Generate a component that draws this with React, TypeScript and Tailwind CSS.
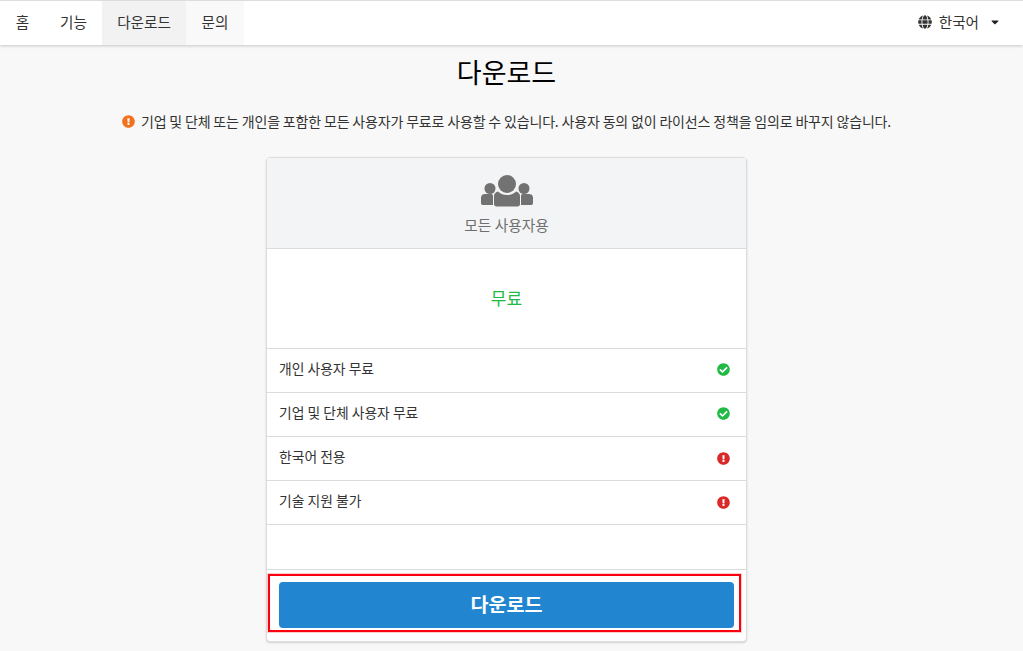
import { FaCaretDown, FaCheckCircle, FaExclamationCircle, FaGlobe } from 'react-icons/fa'

const rows = [
  { label: '개인 사용자 무료', ok: true },
  { label: '기업 및 단체 사용자 무료', ok: true },
  { label: '한국어 전용', ok: false },
  { label: '기술 지원 불가', ok: false },
]

const navItems = [
  { label: '홈', className: 'w-[45px]' },
  { label: '기능', className: 'w-[57px]' },
  { label: '다운로드', className: 'w-[84px] bg-[#f2f2f2]' },
  { label: '문의', className: 'w-[58px] bg-[#f9f9f9]' },
]

function UsersIcon() {
  return (
    <svg width="54" height="34" viewBox="0 0 54 34" fill="#727272">
      <circle cx="27" cy="11" r="9" />
      <circle cx="10" cy="15.5" r="5.5" />
      <circle cx="44" cy="15.5" r="5.5" />
      <path d="M1 32v-7.5C1 22 3 21 5 21h6.5C12.5 21 13 22 13 23v9H3c-1 0-2-.4-2-2z" />
      <path d="M53 32v-7.5C53 22 51 21 49 21h-6.5C41.5 21 41 22 41 23v9h10c1 0 2-.4 2-2z" />
      <path d="M14 23c0-2.500 2-4 4-4.500 2.500 2.500 5.500 3.500 9 3.500s6.500-1 9-3.500c2 .5 4 2 4 4.500v8c0 1.500-1 2.500-2.500 2.500h-21C15 33.500 14 32.500 14 31z" />
    </svg>
  )
}

export default function App() {
  return (
    <div className="h-[651px] overflow-hidden bg-[#f8f8f8] text-[14px] tracking-[-0.17px] text-[#333333] font-['Noto_Sans_CJK_KR','Liberation_Sans',sans-serif]">
      <header className="flex h-[45px] items-stretch justify-between border-t border-[#dddddd] bg-white shadow-[0_1px_3px_rgba(0,0,0,0.2)]">
        <nav className="flex text-[14.6px] tracking-normal">
          {navItems.map((item) => (
            <div key={item.label} className={`flex items-center justify-center pb-[3px] ${item.className}`}>
              {item.label}
            </div>
          ))}
        </nav>
        <div className="flex items-center pr-[22px] pb-[2px] text-[14.6px] tracking-normal">
          <FaGlobe className="mr-[7px] text-[14px]" />
          <span>한국어</span>
          <FaCaretDown className="ml-[10px] text-[12px] text-[#222222]" />
        </div>
      </header>

      <main className="flex w-[1013px] flex-col items-center">
        <h1 className="mt-[9px] text-[27px] leading-[36px] font-normal tracking-normal text-black">다운로드</h1>
        <p className="mt-[21px] flex h-[20px] items-center whitespace-nowrap">
          <FaExclamationCircle className="mr-[6px] text-[13px] text-[#f2711c]" />
          기업 및 단체 또는 개인을 포함한 모든 사용자가 무료로 사용할 수 있습니다. 사용자 동의 없이 라이선스 정책을 임의로 바꾸지 않습니다.
        </p>

        <section className="relative mt-[26px] w-[481px] rounded-[4px] border border-[#dcdcdc] bg-white shadow-[0_1px_2px_rgba(0,0,0,0.15)]">
          <div className="flex h-[91px] flex-col items-center border-b border-[#dcdcdc] bg-[#f3f4f5] pt-[15px] text-[#6f6f6f]">
            <UsersIcon />
            <span className="mt-[8px] text-[14.7px] leading-[20px] tracking-normal">모든 사용자용</span>
          </div>
          <div className="flex h-[100px] items-center justify-center border-b border-[#dcdcdc] pb-[2px] text-[17px] tracking-normal text-[#21ba45]">
            무료
          </div>
          {rows.map((row) => (
            <div key={row.label} className="flex h-[44px] items-center justify-between border-b border-[#dcdcdc] pr-[16px] pl-[12px]">
              <span className="mb-[4px] text-[13.8px] tracking-normal">{row.label}</span>
              {row.ok ? (
                <FaCheckCircle className="mb-[2px] text-[13px] text-[#21ba45]" />
              ) : (
                <FaExclamationCircle className="text-[13px] text-[#db2828]" />
              )}
            </div>
          ))}
          <div className="h-[45px] border-b border-[#dcdcdc]" />
          <div className="px-[12px] pt-[12px] pb-[13px]">
            <button className="flex h-[46px] w-full items-center justify-center rounded-[4px] bg-[#2185d0] pb-[2px] text-[19.6px] font-bold tracking-normal text-white">
              다운로드
            </button>
          </div>
          <div className="absolute top-[416px] left-[1px] h-[58px] w-[473px] border-2 border-[#fa0010] shadow-[0_0_0_1px_rgba(255,0,0,0.2)]" />
        </section>
      </main>
    </div>
  )
}
